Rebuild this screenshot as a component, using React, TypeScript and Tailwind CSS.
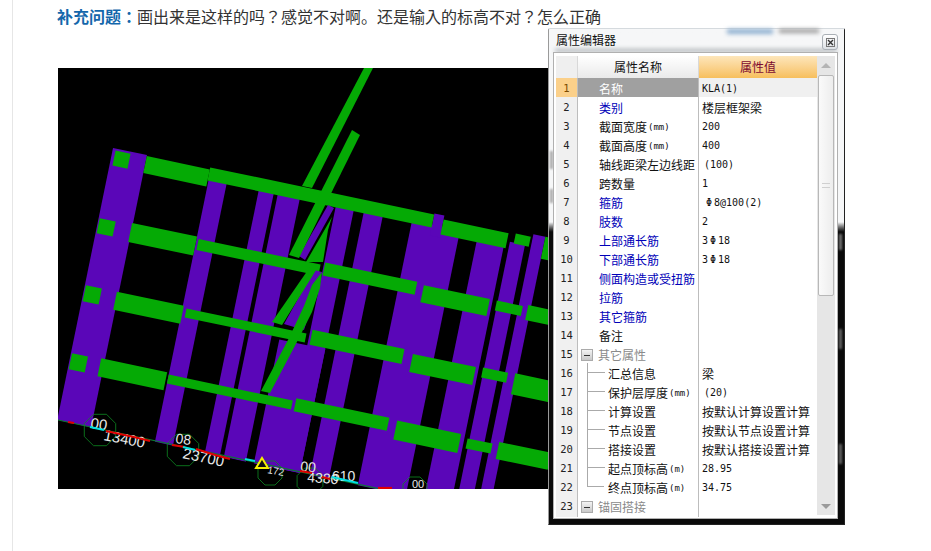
import React from "react";

const CJK = "font-['Noto_Sans_CJK_SC','Noto_Sans',sans-serif]";
const MONO = "font-['DejaVu_Sans_Mono',monospace]";

// the plan is skewed: a runs along the beams, b runs along the columns
const pt = (a: number, b: number) =>
  `${(113 + a - 0.205 * b).toFixed(1)},${(148 + 0.21 * a + b).toFixed(1)}`;
const quad = (a1: number, a2: number, b1: number, b2: number) =>
  [pt(a1, b1), pt(a2, b1), pt(a2, b2), pt(a1, b2)].join(" ");

const columns = [
  [0, 34, 0, 274],
  [98, 116, 10, 274],
  [148, 163, 8, 274],
  [167, 189, 8, 274],
  [225, 243, 8, 274],
  [197, 243, 150, 274],
  [253, 272, 8, 274],
  [301, 349, 10, 274],
  [321, 331, -2, 20],
  [367, 394, 14, 274],
  [399, 414, 10, 274],
  [420, 432, -2, 274],
];

const beams = [
  [34, 97, 1, 18],
  [97, 321, -1, 12],
  [331, 396, 2, 17],
  [403, 418, 1, 11],
  [432, 480, -2, 20],
  [33, 98, 68, 87],
  [100, 222, 70, 81],
  [226, 318, 67, 80],
  [325, 391, 69, 86],
  [398, 424, 69, 79],
  [429, 480, 67, 82],
  [32, 99, 137, 155],
  [102, 222, 139, 148],
  [227, 319, 134, 149],
  [328, 391, 137, 155],
  [398, 423, 136, 146],
  [430, 480, 135, 156],
  [30, 96, 204, 222],
  [98, 222, 206, 215],
  [225, 318, 203, 216],
  [326, 390, 204, 223],
  [397, 422, 207, 217],
  [428, 480, 204, 221],
  [3, 18, 2, 17],
  [1, 17, 70, 85],
  [1, 17, 137, 153],
  [1, 17, 205, 221],
];

const diagonals = [
  "364,68 373,68 312,188 302,186",
  "352,130 360,135 299,258 289,255",
  "332,217 328,230 323,262 306,262",
  "312,264 318,267 282,325 272,322",
  "322,272 320,288 312,312 302,332 298,340 270,393 261,391 289,338 304,306 312,285",
];

const bars = [
  [68, 422, 74, 423, "#e00000"],
  [90, 427, 104, 430, "#00e0e0"],
  [106, 431, 134, 437, "#e00000"],
  [134, 437, 150, 441, "#e00000"],
  [172, 445, 185, 447, "#e00000"],
  [183, 447, 195, 450, "#00e0e0"],
  [196, 449, 215, 455, "#e00000"],
  [215, 455, 230, 459, "#e00000"],
  [245, 459, 255, 461, "#00e0e0"],
  [300, 471, 312, 473, "#e00000"],
  [322, 477, 330, 479, "#e00000"],
  [332, 477, 358, 483, "#00e0e0"],
  [378, 488, 392, 488, "#e00000"],
];

const labels = [
  { t: "00", x: 90, y: 428, r: 8, s: 15 },
  { t: "13400", x: 103, y: 440, r: 11, s: 15 },
  { t: "08", x: 175, y: 443, r: 8, s: 14 },
  { t: "23700", x: 182, y: 458, r: 12, s: 15 },
  { t: "172", x: 267, y: 473, r: 10, s: 10 },
  { t: "00", x: 300, y: 471, r: 5, s: 14 },
  { t: "4380", x: 307, y: 482, r: 4, s: 14 },
  { t: "610", x: 332, y: 481, r: 0, s: 14 },
  { t: "00", x: 412, y: 488, r: 0, s: 11 },
];

const hexes = [
  [100, 430, 17],
  [183, 450, 17],
  [270, 473, 13],
  [310, 481, 14],
  [415, 489, 13],
];

const hexPoints = (cx: number, cy: number, r: number) =>
  [0, 1, 2, 3, 4, 5, 6, 7]
    .map((i) => {
      const t = (i * Math.PI) / 4 + Math.PI / 8;
      return `${(cx + r * Math.cos(t)).toFixed(1)},${(cy + r * Math.sin(t)).toFixed(1)}`;
    })
    .join(" ");

function Plan() {
  return (
    <svg viewBox="58 68 491 421" className="block w-[491px] h-[421px] bg-black">
      {columns.map((c, i) => (
        <polygon key={i} points={quad(c[0], c[1], c[2], c[3])} fill="#5a06b8" />
      ))}
      {beams.map((c, i) => (
        <polygon key={i} points={quad(c[0], c[1], c[2], c[3])} fill="#05aa05" />
      ))}
      {/* purple strips between the braces */}
      <polygon points="328,205 334,208 305,260 299,256" fill="#5a06b8" />
      <polygon points="314,270 322,272 304,330 284,324" fill="#5a06b8" />
      {diagonals.map((p, i) => (
        <polygon key={i} points={p} fill="#05aa05" />
      ))}
      {/* below the base line there is nothing */}
      <polygon points="40,416 380,492 40,492" fill="#000" />
      <line x1="58" y1="420" x2="385" y2="490" stroke="#0a7a30" strokeWidth="1.2" />
      {hexes.map((h, i) => (
        <polygon key={i} points={hexPoints(h[0], h[1], h[2])} fill="none" stroke="#0c8a22" strokeWidth="0.8" />
      ))}
      {labels.map((l, i) => (
        <text
          key={i}
          x={l.x}
          y={l.y}
          fontSize={l.s}
          fill="#e8e8e8"
          fontFamily="'Liberation Sans', sans-serif"
          transform={`rotate(${l.r} ${l.x} ${l.y})`}
        >
          {l.t}
        </text>
      ))}
      {bars.map((b, i) => (
        <line key={i} x1={b[0]} y1={b[1]} x2={b[2]} y2={b[3]} stroke={b[4] as string} strokeWidth="2.2" />
      ))}
      <polygon points="262,458 268,468 256,468" fill="#111" stroke="#f4f000" strokeWidth="2" />
    </svg>
  );
}

type Row = {
  name: string;
  value?: string;
  kind?: "blue" | "group" | "child" | "lastChild";
  indent?: boolean;
};

const rows: Row[] = [
  { name: "名称", value: "KLA(1)" },
  { name: "类别", value: "楼层框架梁", kind: "blue" },
  { name: "截面宽度(mm)", value: "200" },
  { name: "截面高度(mm)", value: "400" },
  { name: "轴线距梁左边线距", value: "(100)", indent: true },
  { name: "跨数量", value: "1" },
  { name: "箍筋", value: "Φ8@100(2)", kind: "blue", indent: true },
  { name: "肢数", value: "2", kind: "blue" },
  { name: "上部通长筋", value: "3Φ18", kind: "blue" },
  { name: "下部通长筋", value: "3Φ18", kind: "blue" },
  { name: "侧面构造或受扭筋", kind: "blue" },
  { name: "拉筋", kind: "blue" },
  { name: "其它箍筋", kind: "blue" },
  { name: "备注" },
  { name: "其它属性", kind: "group" },
  { name: "汇总信息", value: "梁", kind: "child" },
  { name: "保护层厚度(mm)", value: "(20)", kind: "child", indent: true },
  { name: "计算设置", value: "按默认计算设置计算", kind: "child" },
  { name: "节点设置", value: "按默认节点设置计算", kind: "child" },
  { name: "搭接设置", value: "按默认搭接设置计算", kind: "child" },
  { name: "起点顶标高(m)", value: "28.95", kind: "child" },
  { name: "终点顶标高(m)", value: "34.75", kind: "lastChild" },
  { name: "锚固搭接", kind: "group" },
];

function MinusBox() {
  return (
    <span className="flex items-center justify-center w-[12px] h-[12px] border border-[#aaa] bg-gradient-to-b from-[#f4f4f4] to-[#c8c8c8] ml-[3px] mr-[5px] shrink-0">
      <span className="block w-[6px] h-px bg-[#333]" />
    </span>
  );
}

// names carry their unit in a smaller type: 截面宽度(mm)
function NameText({ name }: { name: string }) {
  const m = name.match(/^(.*)(\(.*\))$/);
  if (!m) return <>{name}</>;
  return (
    <>
      {m[1]}
      <span className={`${MONO} text-[9px] ml-px`}>{m[2]}</span>
    </>
  );
}

function ValueText({ value }: { value?: string }) {
  if (!value) return null;
  if (!/^[\x00-\x7fΦ]+$/.test(value)) return <>{value}</>;
  const parts = value.split("Φ");
  return (
    <span className={`${MONO} text-[10px]`}>
      {parts[0]}
      {parts.length > 1 && <span className="mx-[2px]">Φ</span>}
      {parts[1]}
    </span>
  );
}

function PropertyRow({ row, index }: { row: Row; index: number }) {
  const selected = index === 0;
  const tree = row.kind === "child" || row.kind === "lastChild";
  return (
    <div className="grid grid-cols-[22px_121px_118px] h-[19px] border-b border-[#bdbdbd] text-[12px] leading-[18px]">
      <div
        className={`text-center ${MONO} text-[10.5px] leading-[21px] border-r border-[#bdbdbd] ${
          selected ? "bg-[#fbd08a] text-[#7a4a00]" : "bg-[#f0f0f0] text-[#222]"
        }`}
      >
        {index + 1}
      </div>
      <div
        className={`relative flex items-center pt-[1px] whitespace-nowrap border-r border-[#bdbdbd] ${
          selected ? "bg-[#a0a0a0] text-white" : "bg-white"
        } ${row.kind === "blue" ? "text-[#0000b8]" : ""} ${
          row.kind === "group" ? "text-[#8a8a8a]" : ""
        } ${row.kind !== "group" && !tree ? "pl-[21px]" : ""} ${tree ? "pl-[30px]" : ""}`}
      >
        {row.kind === "group" && <MinusBox />}
        {tree && (
          <span
            className={`absolute left-[9px] top-0 w-[17px] border-l border-[#aaa] ${
              row.kind === "lastChild" ? "h-[10px] border-b" : "h-[19px]"
            }`}
          >
            {row.kind === "child" && <span className="absolute left-0 top-[9px] w-[17px] h-px bg-[#aaa]" />}
          </span>
        )}
        <NameText name={row.name} />
      </div>
      <div
        className={`flex items-center pt-[1px] whitespace-nowrap ${selected ? "bg-[#f0f0f0]" : "bg-white"} ${
          row.indent ? "pl-[5px]" : "pl-[3px]"
        }`}
      >
        <ValueText value={row.value} />
      </div>
    </div>
  );
}

function Scrollbar() {
  return (
    <div className="relative flex flex-col items-center w-[18px] bg-[#e6e6e6]">
      <span className="mt-[7px] w-0 h-0 border-x-[5px] border-x-transparent border-b-[5px] border-b-[#b4b4b4]" />
      <div className="mt-[7px] w-[16px] h-[221px] border border-[#b8b8b8] rounded-[2px] bg-gradient-to-r from-[#fafafa] to-[#ededed] flex items-center justify-center">
        <span className="block w-[8px] h-[5px] border-y border-[#d0d0d0]" />
      </div>
      <span className="mt-auto mb-[6px] w-0 h-0 border-x-[5px] border-x-transparent border-t-[5px] border-t-[#9a9a9a]" />
    </div>
  );
}

function CloseIcon() {
  return (
    <svg viewBox="0 0 9 9" className="w-[9px] h-[9px]" fill="none" stroke="#333">
      <rect x="0.5" y="0.5" width="8" height="8" stroke="#777" />
      <path d="M2 2 L7 7 M7 2 L2 7" strokeWidth="1.4" />
    </svg>
  );
}

function AttributeDialog() {
  return (
    <div
      className={`absolute left-[548px] top-[28px] w-[297px] h-[497px] flex flex-col border border-[#222] border-t-[#d5dade] border-l-[#9a9a9a] rounded-t-[2px] bg-gradient-to-b from-[#f6f7f8] from-[39%] to-[#0a0a0a] to-[41%] text-[#111] ${CJK}`}
    >
      {/* blurred things behind the glass */}
      <span className="absolute left-[178px] top-0 w-[46px] h-[5px] bg-[#8fb0d0] blur-[2px]" />
      <span className="absolute left-[230px] top-0 w-[40px] h-[4px] bg-[#9a9a9a] blur-[2px]" />
      <span className="absolute left-[6px] top-[20px] w-[282px] h-[3px] bg-[#a8adb2] blur-[2px]" />
      <span className="absolute left-[1px] top-[122px] w-[3px] h-[18px] bg-[#a8a8a8] blur-[1px]" />
      <span className="absolute left-[1px] top-[160px] w-[3px] h-[14px] bg-[#a8a8a8] blur-[1px]" />
      <span className="absolute right-[2px] top-[205px] w-[3px] h-[16px] bg-[#777] blur-[1px]" />
      <span className="absolute right-[2px] top-[300px] w-[3px] h-[20px] bg-[#666] blur-[1px]" />
      <span className="absolute right-[2px] top-[415px] w-[3px] h-[20px] bg-[#666] blur-[1px]" />

      <div className="relative flex items-center justify-between h-[23px] shrink-0 pl-[7px] pr-[6px]">
        <span className="text-[12px] leading-none -mt-[1px]">属性编辑器</span>
        <span className="flex items-center justify-center mt-[3px] w-[16px] h-[16px] border border-[#aab0b6] rounded-[3px] bg-gradient-to-b from-white to-[#dde1e5]">
          <CloseIcon />
        </span>
      </div>

      <div className="relative flex ml-[4px] mr-[6px] h-[467px] shrink-0 bg-white border border-[#b0b0b0] pt-[3px] pb-[3px] pl-[2px] pr-[2px]">
        <div className="flex flex-col w-[261px]">
          <div className="grid grid-cols-[22px_121px_118px] h-[22px] text-[12px] leading-[22px] text-center shrink-0 border-b border-[#bdbdbd]">
            <div className="bg-[#efefef] border-r border-[#d8d8d8]" />
            <div className="bg-gradient-to-b from-white to-[#eaeaea] border-r border-[#d8d8d8]">属性名称</div>
            <div className="bg-gradient-to-b from-[#fde6ba] to-[#f7bf5c] text-[#7d0a30]">属性值</div>
          </div>
          {rows.map((row, i) => (
            <PropertyRow key={row.name} row={row} index={i} />
          ))}
        </div>
        <Scrollbar />
      </div>
    </div>
  );
}

export default function App() {
  return (
    <div className={`relative w-[931px] h-[551px] overflow-hidden bg-white ${CJK}`}>
      <div className="ml-3 h-full border-l border-[#e6e6e6] pl-[44px] pt-[6px]">
        <p className="font-['Noto_Sans_CJK_JP','Noto_Sans',sans-serif] text-[16px] leading-[20px] text-[#333] whitespace-nowrap">
          <strong className="font-bold text-[#1467ab]">补充问题：</strong>
          画出来是这样的吗？感觉不对啊。还是输入的标高不对？怎么正确
        </p>
        <div className="mt-[42px] ml-px w-[491px]">
          <Plan />
        </div>
      </div>
      <AttributeDialog />
    </div>
  );
}
